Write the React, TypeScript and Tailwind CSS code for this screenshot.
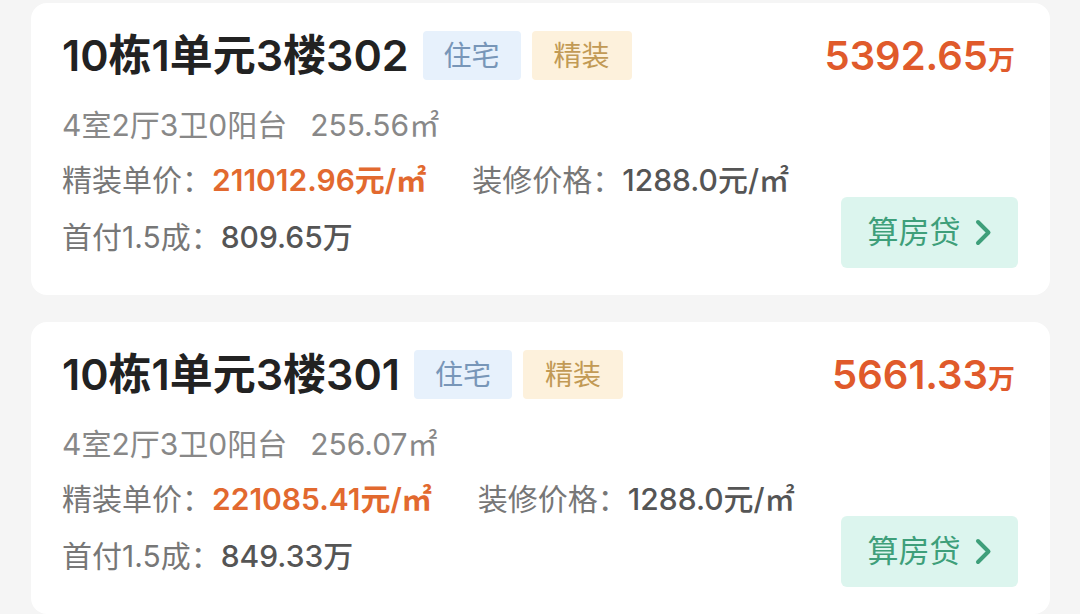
import React from 'react';

interface Listing {
  room: string;
  layout: string;
  area: string;
  unitPrice: string;
  decoPrice: string;
  downPay: string;
  total: string;
}

const listings: Listing[] = [
  {
    room: '10栋1单元3楼302',
    layout: '4室2厅3卫0阳台',
    area: '255.56㎡',
    unitPrice: '211012.96元/㎡',
    decoPrice: '1288.0元/㎡',
    downPay: '809.65万',
    total: '5392.65',
  },
  {
    room: '10栋1单元3楼301',
    layout: '4室2厅3卫0阳台',
    area: '256.07㎡',
    unitPrice: '221085.41元/㎡',
    decoPrice: '1288.0元/㎡',
    downPay: '849.33万',
    total: '5661.33',
  },
];

function ListingCard({ item }: { item: Listing }) {
  return (
    <div className="bg-white rounded-2xl pl-[31px] pr-[32px] pt-[28px] pb-[27px]">
      {/* header: room number, tags, total price */}
      <div className="flex items-center h-[49px]">
        <h3 className="text-[43px] leading-none font-semibold text-[#222]">{item.room}</h3>
        <span className="ml-[14px] w-[98px] h-[49px] flex items-center justify-center rounded-[4px] bg-[#e7f1fc] text-[#7896b8] text-[28px]">
          住宅
        </span>
        <span className="ml-[11px] w-[100px] h-[49px] flex items-center justify-center rounded-[4px] bg-[#fdf1dc] text-[#c29a55] text-[28px]">
          精装
        </span>
        <div className="ml-auto mr-[3px] flex items-baseline text-[#e05a2b] font-semibold">
          <span className="text-[40px] leading-none">{item.total}</span>
          <span className="text-[27px] leading-none">万</span>
        </div>
      </div>

      <div className="flex items-end">
        <div className="flex flex-col">
          <div className="mt-[25px] h-[40px] flex items-center text-[30px] text-[#888]">
            <span>{item.layout}</span>
            <span className="ml-[23px]">{item.area}</span>
          </div>
          <div className="mt-[15px] h-[40px] flex items-center text-[30px] text-[#777]">
            <span>精装单价：</span>
            <span className="text-[#e2692f] font-semibold">{item.unitPrice}</span>
            <span className="ml-[46px]">装修价格：</span>
            <span className="text-[#555] font-medium">{item.decoPrice}</span>
          </div>
          <div className="mt-[17px] mb-[11px] h-[40px] flex items-center text-[30px] text-[#777]">
            <span>首付1.5成：</span>
            <span className="text-[#555] font-medium">{item.downPay}</span>
          </div>
        </div>
        <button className="ml-auto w-[177px] h-[71px] flex items-center justify-center gap-[14px] rounded-[6px] bg-[#dcf5ee] text-[#3e9f7a] text-[31px]">
          <span>算房贷</span>
          <svg width="17" height="27" viewBox="0 0 17 27" fill="none">
            <path d="M3 3 L13.5 13.5 L3 24" stroke="#3e9f7a" strokeWidth="4" strokeLinecap="round" strokeLinejoin="round" />
          </svg>
        </button>
      </div>
    </div>
  );
}

export default function App() {
  return (
    <div
      className="w-[1080px] h-[614px] overflow-hidden bg-[#f5f5f5] pl-[31px] pr-[30px] pt-[3px] flex flex-col gap-[27px]"
      style={{ fontFamily: 'Inter, "Noto Sans CJK SC", sans-serif' }}
    >
      {listings.map((item) => (
        <ListingCard key={item.room} item={item} />
      ))}
    </div>
  );
}
